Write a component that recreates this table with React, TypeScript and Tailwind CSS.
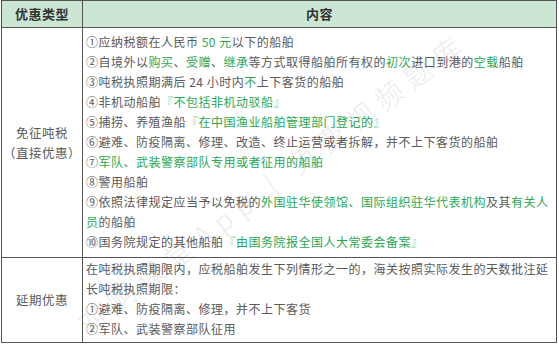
import type { ReactNode } from 'react'

const G = ({ children }: { children: ReactNode }) => (
  <span className="text-[#2aa952]">{children}</span>
)

const Q = ({ children }: { children: ReactNode }) => (
  <span className="text-[#2aa952]">
    <span className="text-[#8fd3a6]">『</span>
    {children}
    <span className="text-[#8fd3a6]">』</span>
  </span>
)

const Line = ({ children }: { children: ReactNode }) => (
  <div className="h-5 whitespace-nowrap leading-5">{children}</div>
)

export default function App() {
  return (
    <div
      className="relative h-[344px] w-[559px] overflow-hidden bg-white pl-px text-[12px] tracking-[0.5px] text-[#5a5a5a]"
      style={{ fontFamily: '"Noto Sans CJK SC", "Noto Sans", sans-serif' }}
    >
      <table className="w-[556px] table-fixed border-collapse border border-[#555]">
        <colgroup>
          <col className="w-[81px]" />
          <col />
        </colgroup>
        <thead>
          <tr className="h-[27px] bg-[#cbe6d3] text-[13px] font-medium text-[#333]">
            <th className="border border-[#555] text-center">优惠类型</th>
            <th className="border border-[#555] text-center">内容</th>
          </tr>
        </thead>
        <tbody>
          <tr>
            <td className="border border-[#555] text-center text-[12.5px] leading-5">
              免征吨税
              <br />
              （直接优惠）
            </td>
            <td className="border border-[#555] px-[3px] pb-[5px] pt-[4px]">
              <Line>
                ①应纳税额在人民币 <G>50 元</G>以下的船舶
              </Line>
              <Line>
                ②自境外以<G>购买</G>、<G>受赠</G>、<G>继承</G>等方式取得船舶所有权的<G>初次</G>进口到港的<G>空载</G>船舶
              </Line>
              <Line>
                ③吨税执照期满后 24 小时内<G>不</G>上下客货的船舶
              </Line>
              <Line>
                ④非机动船舶<Q>不包括非机动驳船</Q>
              </Line>
              <Line>
                ⑤捕捞、养殖渔船<Q>在中国渔业船舶管理部门登记的</Q>
              </Line>
              <Line>⑥避难、防疫隔离、修理、改造、终止运营或者拆解，并不上下客货的船舶</Line>
              <Line>
                ⑦<G>军队、武装警察部队专用或者征用的船舶</G>
              </Line>
              <Line>⑧警用船舶</Line>
              <Line>
                ⑨依照法律规定应当予以免税的<G>外国驻华使领馆、国际组织驻华代表机构</G>及其<G>有关人</G>
              </Line>
              <Line>
                <G>员</G>的船舶
              </Line>
              <Line>
                ⑩国务院规定的其他船舶<Q>由国务院报全国人大常委会备案</Q>
              </Line>
            </td>
          </tr>
          <tr>
            <td className="border border-[#555] text-center text-[12.5px]">延期优惠</td>
            <td className="border border-[#555] px-[3px] pb-[3px] pt-px">
              <Line>在吨税执照期限内，应税船舶发生下列情形之一的，海关按照实际发生的天数批注延</Line>
              <Line>长吨税执照期限：</Line>
              <Line>①避难、防疫隔离、修理，并不上下客货</Line>
              <Line>②军队、武装警察部队征用</Line>
            </td>
          </tr>
        </tbody>
      </table>

      {/* watermark */}
      <div className="pointer-events-none absolute left-[272px] top-[182px] -translate-x-1/2 -translate-y-1/2 -rotate-[37deg] whitespace-nowrap text-[28px] tracking-[8px] text-black/[0.08]">
        对啊课堂App | 免费视频题库
      </div>
    </div>
  )
}
